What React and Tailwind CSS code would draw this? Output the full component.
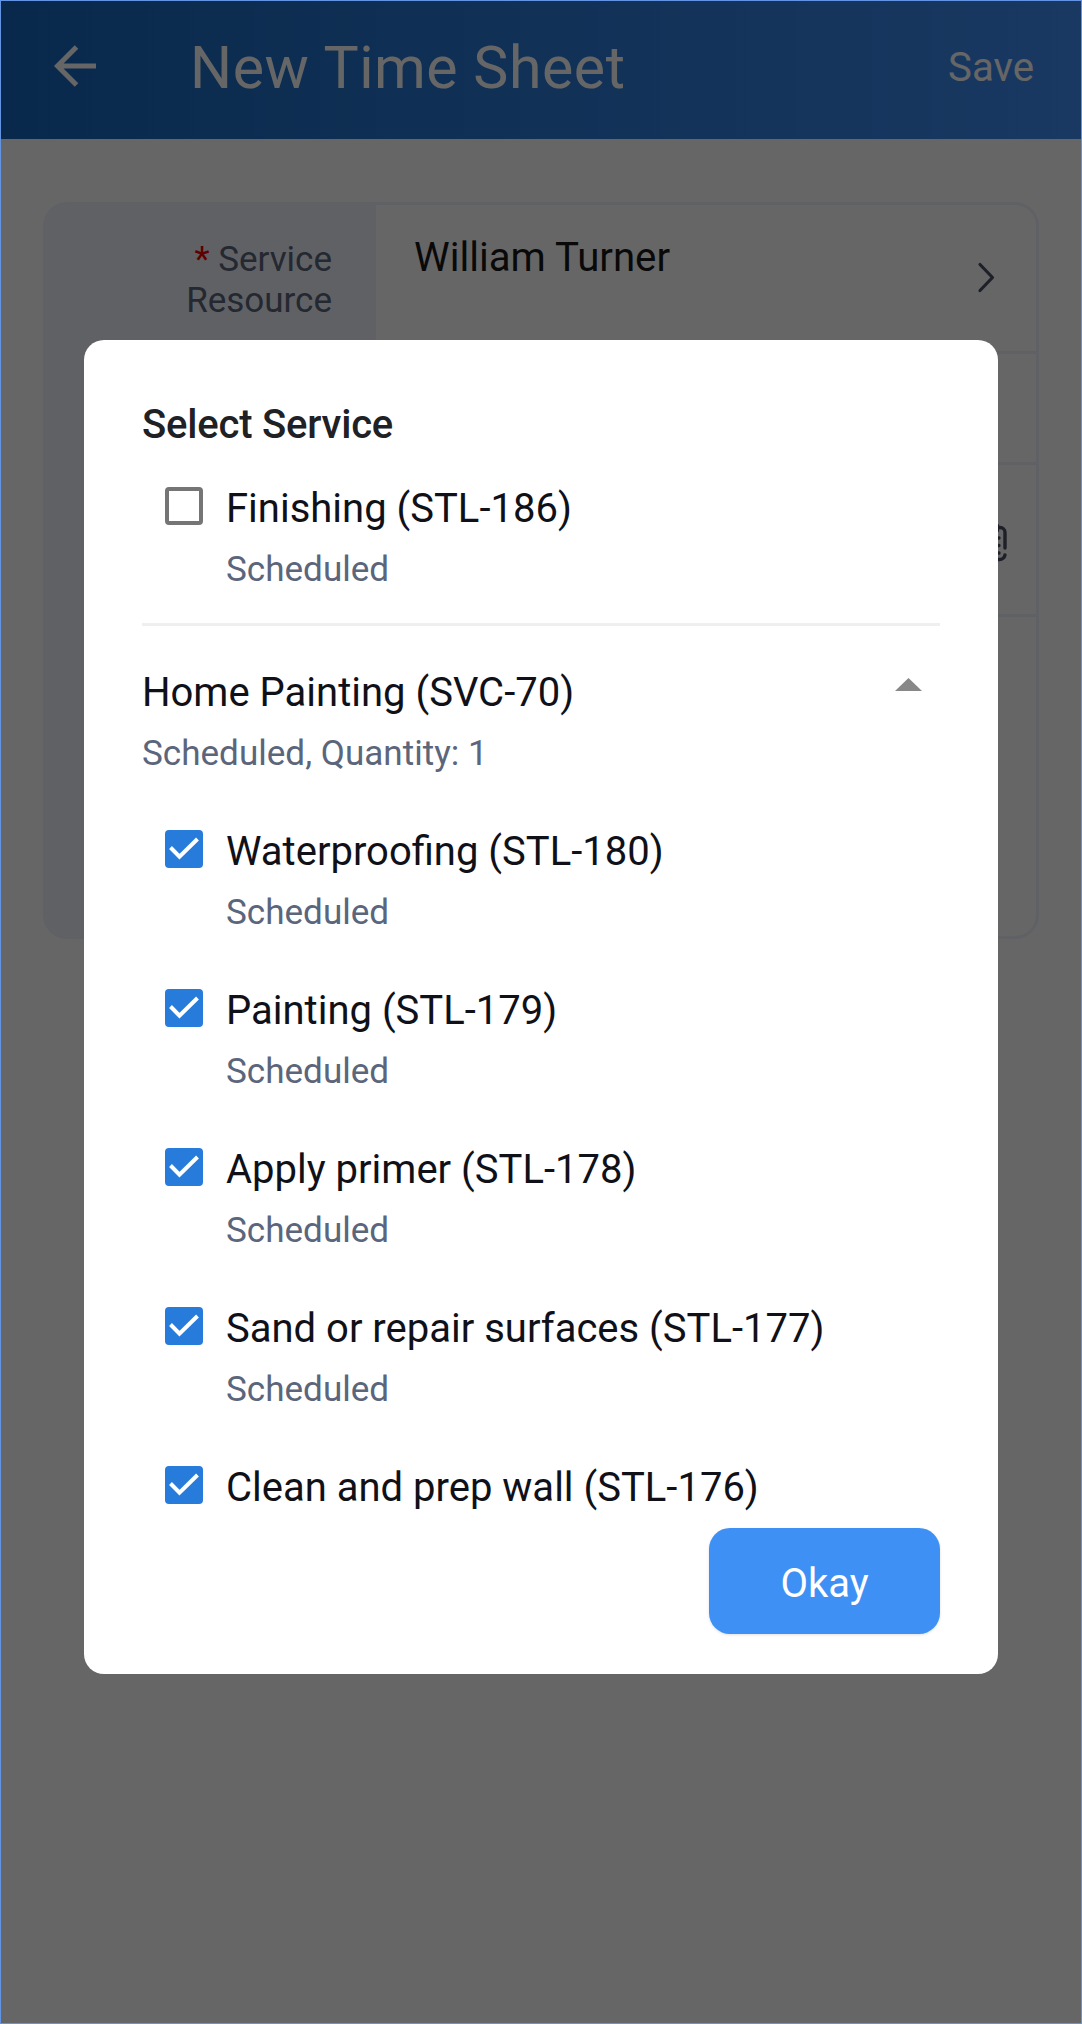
import { useState } from 'react'

const SERVICE_LINES = [
  { id: 'STL-180', name: 'Waterproofing', status: 'Scheduled' },
  { id: 'STL-179', name: 'Painting', status: 'Scheduled' },
  { id: 'STL-178', name: 'Apply primer', status: 'Scheduled' },
  { id: 'STL-177', name: 'Sand or repair surfaces', status: 'Scheduled' },
  { id: 'STL-176', name: 'Clean and prep wall' },
]

function BackArrow() {
  return (
    <svg width="42" height="42" viewBox="0 0 42 42" fill="none" stroke="#fff" strokeWidth="5">
      <path d="M42 21H4M22.5 2L3.5 21l19 19" />
    </svg>
  )
}

function Chevron() {
  return (
    <svg width="18" height="33" viewBox="0 0 18 33" fill="none" stroke="#4a5068"
      strokeWidth="3.2" strokeLinecap="round" strokeLinejoin="round">
      <path d="M3 3.5l12.5 13L3 29.5" />
    </svg>
  )
}

function CalendarIcon() {
  return (
    <svg width="40" height="42" viewBox="0 0 40 42" fill="none" stroke="#4a5068"
      strokeWidth="3.4" strokeLinecap="round">
      <path d="M38 27V11.500a5 5 0 0 0-5-5H7a5 5 0 0 0-5 5V33a5.500 5.500 0 0 0 5.500 5.500h25A5.500 5.500 0 0 0 38 34M8 4.500v5M30.500 4.500v5" />
      <path d="M9 17h2M19.500 17h2M30 17h2M9 24.500h2M19.500 24.500h2M30 24.500h2M9 32h2M19.500 32h2M30 32h2" />
    </svg>
  )
}

function Checkbox({ checked }) {
  if (!checked) {
    return <span className="mt-[3px] size-[38px] shrink-0 rounded-[4px] border-4 border-[#757575]" />
  }
  return (
    <span className="mt-[3px] size-[38px] shrink-0 rounded-[4px] bg-[#277bdb]">
      <svg width="38" height="38" viewBox="0 0 38 38" fill="none" stroke="#fff" strokeWidth="4">
        <path d="M5.5 17.5l9 9.2L32.5 9" />
      </svg>
    </span>
  )
}

function ServiceText({ name, id, detail }) {
  return (
    <span className="block pt-px text-left">
      <span className="block h-12 whitespace-nowrap text-[40px] leading-[48px] text-[#101118]">
        {name} ({id})
      </span>
      {detail && (
        <span className="mt-4 block h-10 whitespace-nowrap text-[35.1px] leading-10 text-[#5b657b]">
          {detail}
        </span>
      )}
    </span>
  )
}

function ServiceRow({ item, checked, onToggle }) {
  return (
    <button className="flex h-[105px] shrink-0 items-start gap-[23px] pl-[23px]" onClick={() => onToggle(item.id)}>
      <Checkbox checked={checked} />
      <ServiceText name={item.name} id={item.id} detail={item.status} />
    </button>
  )
}

export default function App() {
  const [selected, setSelected] = useState(SERVICE_LINES.map(s => s.id))
  const [open, setOpen] = useState(true)

  const toggle = id =>
    setSelected(prev => (prev.includes(id) ? prev.filter(s => s !== id) : [...prev, id]))

  return (
    <div className="relative h-[2024px] w-[1082px] overflow-hidden border border-[#6394e4] bg-white font-['Roboto',sans-serif]">
      {/* Header */}
      <header className="flex h-[138px] items-center bg-linear-to-r from-[#1467bd] from-0% to-[#418ef5] to-100% pr-[47px] pl-[53px] text-white">
        <div className="-mt-[9px]"><BackArrow /></div>
        <h1 className="-mt-[4px] ml-[94px] text-[59px] leading-[70px] tracking-[0.55px]">New Time Sheet</h1>
        <span className="-mt-[5px] ml-auto text-[40.2px] leading-[48px]">Save</span>
      </header>

      {/* Form */}
      <div className="mx-[42px] mt-[63px] flex h-[737px] overflow-hidden rounded-[24px] border-[3px] border-[#f0f2fa]">
        <div className="w-[330px] shrink-0 bg-[#f0f2fc] pt-[34px] pr-[44px] text-right text-[35px] leading-[41px] text-[#5b657b]">
          <p><span className="text-[#f00000]">*</span> Service<br />Resource</p>
        </div>
        <div className="flex grow flex-col">
          <div className="flex h-[149px] shrink-0 items-start justify-between border-b-[3px] border-[#f0f2fa] pr-[41px] pl-[38px]">
            <span className="mt-[29px] text-[40.2px] leading-[48px] text-[#181818]">William Turner</span>
            <span className="mt-[56px]"><Chevron /></span>
          </div>
          <div className="h-[111px] shrink-0 border-b-[3px] border-[#f0f2fa]" />
          <div className="flex h-[152px] shrink-0 items-start justify-end border-b-[3px] border-[#f0f2fa] pt-[56px] pr-[29px]">
            <CalendarIcon />
          </div>
        </div>
      </div>

      {/* Scrim and dialog */}
      <div className="absolute inset-0 bg-black/60">
        <div className="mx-[83px] mt-[339px] flex h-[1334px] flex-col rounded-[20px] bg-white px-[58px] pt-[61px]">
          <h2 className="h-[47px] text-[40px] leading-[48px] font-medium tracking-[-0.2px] text-[#202124]">Select Service</h2>

          <div className="flex h-[1080px] flex-col overflow-hidden pt-9">
            <ServiceRow
              item={{ id: 'STL-186', name: 'Finishing', status: 'Scheduled' }}
              checked={selected.includes('STL-186')}
              onToggle={toggle} />
            <div className="mt-[34px] mb-[42px] h-[3px] shrink-0 bg-[#efefef]" />

            <button className="flex h-[105px] shrink-0 items-start justify-between pr-[18px]" onClick={() => setOpen(!open)}>
              <ServiceText name="Home Painting" id="SVC-70" detail="Scheduled, Quantity: 1" />
              <svg className="mt-[10px]" width="27" height="13" viewBox="0 0 27 13" fill="#888">
                <path d={open ? 'M0 13L13.5 0 27 13z' : 'M0 0l13.5 13L27 0z'} />
              </svg>
            </button>

            {open && (
              <div className="mt-[54px] flex flex-col gap-[54px]">
                {SERVICE_LINES.map(s => (
                  <ServiceRow key={s.id} item={s} checked={selected.includes(s.id)} onToggle={toggle} />
                ))}
              </div>
            )}
          </div>

          <button className="h-[106px] w-[231px] shrink-0 self-end rounded-[21px] bg-[#3e90f4] pt-[6px] text-[40px] leading-[48px] text-white shadow-[0_1px_3px_rgba(0,0,0,0.12)]">
            Okay
          </button>
        </div>
      </div>
    </div>
  )
}
